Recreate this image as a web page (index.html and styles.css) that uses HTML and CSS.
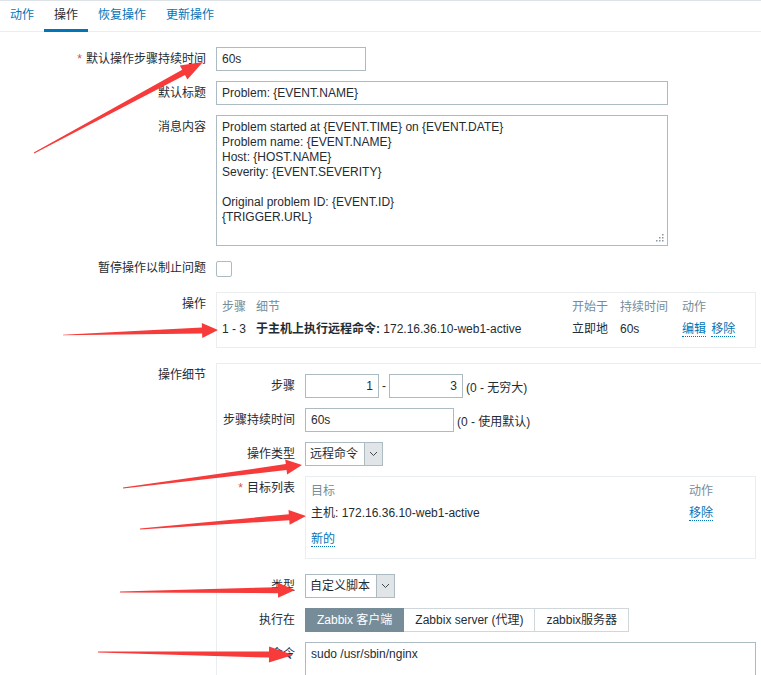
FILE: index.html
```html
<!DOCTYPE html>
<html lang="zh-CN">
<head>
<meta charset="utf-8">
<title>操作</title>
<link rel="stylesheet" href="styles.css">
</head>
<body>
<nav class="tabs">
  <a class="tab" href="#">动作</a>
  <a class="tab active" href="#">操作</a>
  <a class="tab" href="#">恢复操作</a>
  <a class="tab" href="#">更新操作</a>
</nav>

<div class="form">
  <div class="lbl req">默认操作步骤持续时间</div>
  <div class="ctl"><div class="input w150">60s</div></div>

  <div class="lbl">默认标题</div>
  <div class="ctl"><div class="input">Problem: {EVENT.NAME}</div></div>

  <div class="lbl">消息内容</div>
  <div class="ctl">
    <div class="textarea msg">Problem started at {EVENT.TIME} on {EVENT.DATE}<br>Problem name: {EVENT.NAME}<br>Host: {HOST.NAME}<br>Severity: {EVENT.SEVERITY}<br><br>Original problem ID: {EVENT.ID}<br>{TRIGGER.URL}<svg class="grip" width="8" height="8" viewBox="0 0 8 8"><rect x="6" y="0" width="1.5" height="1.5"/><rect x="3" y="3" width="1.5" height="1.5"/><rect x="6" y="3" width="1.5" height="1.5"/><rect x="0" y="6" width="1.5" height="1.5"/><rect x="3" y="6" width="1.5" height="1.5"/><rect x="6" y="6" width="1.5" height="1.5"/></svg></div>
  </div>

  <div class="lbl chk-lbl">暂停操作以制止问题</div>
  <div class="ctl chk-row"><span class="checkbox"></span></div>

  <div class="lbl">操作</div>
  <div class="ctl">
    <div class="box ops">
      <div class="th">步骤</div><div class="th">细节</div><div class="th">开始于</div><div class="th">持续时间</div><div class="th">动作</div>
      <div class="td">1 - 3</div>
      <div class="td"><b>于主机上执行远程命令:</b> 172.16.36.10-web1-active</div>
      <div class="td">立即地</div>
      <div class="td">60s</div>
      <div class="td"><a class="link" href="#">编辑</a> <a class="link gap" href="#">移除</a></div>
    </div>
  </div>

  <div class="lbl mt5">操作细节</div>
  <div class="ctl details mt5">
    <div class="dgrid">
      <div class="lbl">步骤</div>
      <div class="ctl inline">
        <div class="input w74 right">1</div><span class="dash">-</span><div class="input w74 right">3</div><span class="hint">(0 - 无穷大)</span>
      </div>

      <div class="lbl">步骤持续时间</div>
      <div class="ctl inline">
        <div class="input w149">60s</div><span class="hint">(0 - 使用默认)</span>
      </div>

      <div class="lbl">操作类型</div>
      <div class="ctl inline">
        <div class="select"><span class="val">远程命令</span><span class="btn"><svg width="9" height="6" viewBox="0 0 9 6"><polyline points="1,1 4.5,4.5 8,1" fill="none" stroke="#3d4a51" stroke-width="1"/></svg></span></div>
      </div>

      <div class="lbl req">目标列表</div>
      <div class="ctl">
        <div class="box tbox">
          <div class="th">目标</div><div class="th">动作</div>
          <div class="td">主机: 172.16.36.10-web1-active</div><div class="td"><a class="link" href="#">移除</a></div>
          <div class="td newrow"><a class="link" href="#">新的</a></div>
        </div>
      </div>

      <div class="lbl mt5">类型</div>
      <div class="ctl inline mt5">
        <div class="select"><span class="val">自定义脚本</span><span class="btn"><svg width="9" height="6" viewBox="0 0 9 6"><polyline points="1,1 4.5,4.5 8,1" fill="none" stroke="#3d4a51" stroke-width="1"/></svg></span></div>
      </div>

      <div class="lbl">执行在</div>
      <div class="ctl inline">
        <div class="radio"><span class="on">Zabbix 客户端</span><span>Zabbix server (代理)</span><span>zabbix服务器</span></div>
      </div>

      <div class="lbl">命令</div>
      <div class="ctl">
        <div class="textarea cmd">sudo /usr/sbin/nginx</div>
      </div>
    </div>
  </div>
</div>

<svg class="arrows" width="761" height="675" viewBox="0 0 761 675">
  <polygon points="34.2,153.4 185,75.1 187.4,79.5 203,62 179.8,65.4 182.2,69.8 33.8,152.6"/>
  <polygon points="63,335.3 202.1,333.5 202.3,338 218,330 201.8,323 201.9,327.5 63,334.7"/>
  <polygon points="123.1,488.5 286.5,470 287.1,474.5 302,465 285.2,459.6 285.8,464.1 122.9,487.5"/>
  <polygon points="140,529.5 289.3,520.3 289.6,524.8 306,516 288.5,509.9 288.8,514.3 140,528.5"/>
  <polygon points="120,592.5 278,593.2 278.1,597.7 295,590 277.9,582.7 278,587.2 120,591.5"/>
  <polygon points="98,652.5 269,657.6 268.9,662.6 293,655 269.1,646.6 269,651.6 98,651.5"/>
</svg>
</body>
</html>
```

FILE: styles.css
```css
html, body {
  margin: 0;
  padding: 0;
  overflow: hidden;
  background: #ffffff;
}
body {
  position: relative;
  width: 761px;
  height: 675px;
  font-family: "Liberation Sans", "Noto Sans CJK SC", sans-serif;
  font-size: 12px;
  color: #1f2c33;
}

/* tabs */
.tabs {
  display: flex;
  height: 30px;
  border-top: 1px solid #dde3e6;
  border-bottom: 1px solid #ebeef0;
}
.tab {
  display: block;
  height: 31px;
  box-sizing: border-box;
  padding: 0 10px;
  line-height: 28px;
  border-bottom: 3px solid transparent;
  color: #0275b8;
  text-decoration: none;
}
.tab.active {
  color: #1f2c33;
  border-bottom-color: #0275b8;
}

/* form grid */
.form {
  display: grid;
  grid-template-columns: 206px 1fr;
  column-gap: 10px;
  row-gap: 10px;
  padding: 15px 5px 0 0;
}
.lbl {
  line-height: 24px;
  text-align: right;
  white-space: nowrap;
}
.lbl.req::before {
  content: "*";
  color: #d64e4e;
  margin-right: 4px;
}
.ctl {
  min-width: 0;
}
.inline {
  display: flex;
  align-items: center;
  white-space: nowrap;
}
.mt5 {
  margin-top: 5px;
}

/* inputs */
.input {
  height: 24px;
  box-sizing: border-box;
  border: 1px solid #acbbc2;
  padding: 0 5px;
  line-height: 22px;
  white-space: nowrap;
  background: #fff;
}
.w150 { width: 150px; }
.w149 { width: 149px; }
.w74 { width: 74px; }
.right { text-align: right; }
.form > .ctl > .input:not(.w150) { width: 452px; }
.dash { margin: 0 3px; }
.hint { margin-left: 3px; }

.textarea {
  position: relative;
  box-sizing: border-box;
  border: 1px solid #acbbc2;
  padding: 4px 5px;
  line-height: 15px;
  background: #fff;
}
.msg {
  width: 452px;
  height: 131px;
}
.cmd {
  height: 60px;
}
.grip {
  position: absolute;
  right: 3px;
  bottom: 3px;
  fill: #8a979e;
}

/* checkbox */
.chk-row {
  height: 26px;
}
.checkbox {
  display: block;
  width: 16px;
  height: 16px;
  box-sizing: border-box;
  margin-top: 5px;
  border: 1px solid #acbbc2;
  border-radius: 2px;
  background: #fff;
}

/* boxes / tables */
.box {
  border: 1px solid #ebeef0;
  display: grid;
}
.ops {
  padding: 4px 5px 6px;
  grid-template-columns: 34px 316px 48px 62px 1fr;
}
.th {
  color: #768d99;
  line-height: 20px;
  white-space: nowrap;
}
.td {
  line-height: 24px;
  white-space: nowrap;
}
.link {
  color: #0275b8;
  text-decoration: none;
  border-bottom: 1px dotted #0275b8;
}
.link.gap {
  margin-left: 2px;
}

/* operation details */
.details {
  margin-right: -5px;
  border-top: 1px solid #ebeef0;
  border-left: 1px solid #ebeef0;
  padding: 10px 5px 0 5px;
}
.dgrid {
  display: grid;
  grid-template-columns: 73px 1fr;
  column-gap: 10px;
  row-gap: 10px;
}
.tbox {
  padding: 4px 5px 7px;
  grid-template-columns: 1fr 61px;
}
.newrow {
  grid-column: 1 / -1;
  margin-top: 2px;
}

/* select */
.select {
  display: inline-flex;
  height: 24px;
  box-sizing: border-box;
  border: 1px solid #acbbc2;
  background: #fff;
}
.select .val {
  padding: 0 6px 0 4px;
  line-height: 22px;
}
.select .btn {
  width: 17px;
  border-left: 1px solid #acbbc2;
  background: #e1e5e8;
  display: flex;
  align-items: center;
  justify-content: center;
}

/* radio group */
.radio {
  display: inline-flex;
}
.radio span {
  height: 24px;
  box-sizing: border-box;
  border: 1px solid #cfd7db;
  border-left: none;
  padding: 0 11px;
  line-height: 22px;
  background: #fff;
}
.radio span:first-child {
  border-left: 1px solid #768d99;
}
.radio span.on {
  background: #768d99;
  border-color: #768d99;
  color: #ffffff;
}

/* annotation arrows */
.arrows {
  position: absolute;
  left: 0;
  top: 0;
  pointer-events: none;
  fill: #f73a3a;
}
```
